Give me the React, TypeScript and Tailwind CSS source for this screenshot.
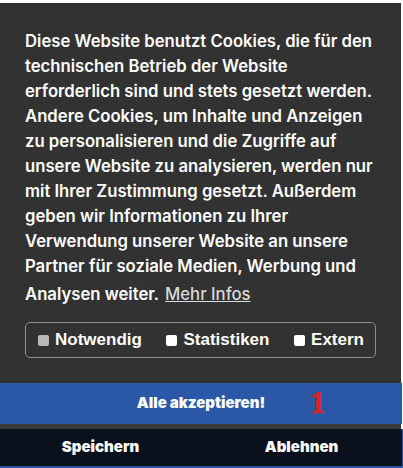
import React from "react";

function Check({ label, disabled }: { label: string; disabled?: boolean }) {
  return (
    <label className="flex items-center gap-[6px]">
      <span
        className={
          disabled
            ? "block w-[11px] h-[11px] rounded-[2px] bg-[#b9b9b9]"
            : "block w-[11px] h-[11px] rounded-[2px] bg-white"
        }
      />
      <span className="text-[17px] font-bold text-white leading-[24px] font-['Liberation_Sans',Arial,sans-serif]">
        {label}
      </span>
    </label>
  );
}

const lines = [
  "Diese Website benutzt Cookies, die für den",
  "technischen Betrieb der Website",
  "erforderlich sind und stets gesetzt werden.",
  "Andere Cookies, um Inhalte und Anzeigen",
  "zu personalisieren und die Zugriffe auf",
  "unsere Website zu analysieren, werden nur",
  "mit Ihrer Zustimmung gesetzt. Außerdem",
  "geben wir Informationen zu Ihrer",
  "Verwendung unserer Website an unsere",
  "Partner für soziale Medien, Werbung und",
];

export default function App() {
  return (
    <div className="w-[403px] h-[468px] bg-white pt-[3px] overflow-hidden">
      <div className="w-[401px] h-[380px] bg-[#323232] pt-[26px] px-[25px]">
        <p className="text-[16.7px] leading-[25px] font-semibold text-white font-['Inter',sans-serif] whitespace-nowrap">
          {lines.map((l) => (
            <React.Fragment key={l}>
              {l}
              <br />
            </React.Fragment>
          ))}
          Analysen weiter.{" "}
          <a className="inline-block py-[3px] ml-[2px] text-[#d9d9d9] underline font-medium">
            Mehr Infos
          </a>
        </p>
        <div className="mt-[12px] h-[36px] border border-[#8e8e8e] rounded-[5px] flex items-center justify-between pl-[12px] pr-[11px]">
          <Check label="Notwendig" disabled />
          <Check label="Statistiken" />
          <Check label="Extern" />
        </div>
      </div>
      <div className="relative w-[402px] h-[41px] bg-[#2a58a6] flex items-center justify-center">
        <span className="text-[15px] font-black text-white font-['Inter',sans-serif]">
          Alle akzeptieren!
        </span>
        <span className="absolute left-[310px] top-[2px] text-[31px] leading-[36px] font-black text-[#d7262b] font-['Liberation_Serif',serif] [-webkit-text-stroke:0.6px_#d7262b]">
          1
        </span>
      </div>
      <div className="w-[401px] h-[5px] bg-[#383a3b]" />
      <div className="w-[403px] h-[39px] bg-[#2a58a6] pr-[1px] pb-[2px]">
        <div className="h-full bg-[#0b111c] grid grid-cols-2 items-center">
          <span className="text-center text-[15px] font-black text-white font-['Inter',sans-serif]">
            Speichern
          </span>
          <span className="text-center text-[15px] font-black text-white font-['Inter',sans-serif]">
            Ablehnen
          </span>
        </div>
      </div>
    </div>
  );
}
